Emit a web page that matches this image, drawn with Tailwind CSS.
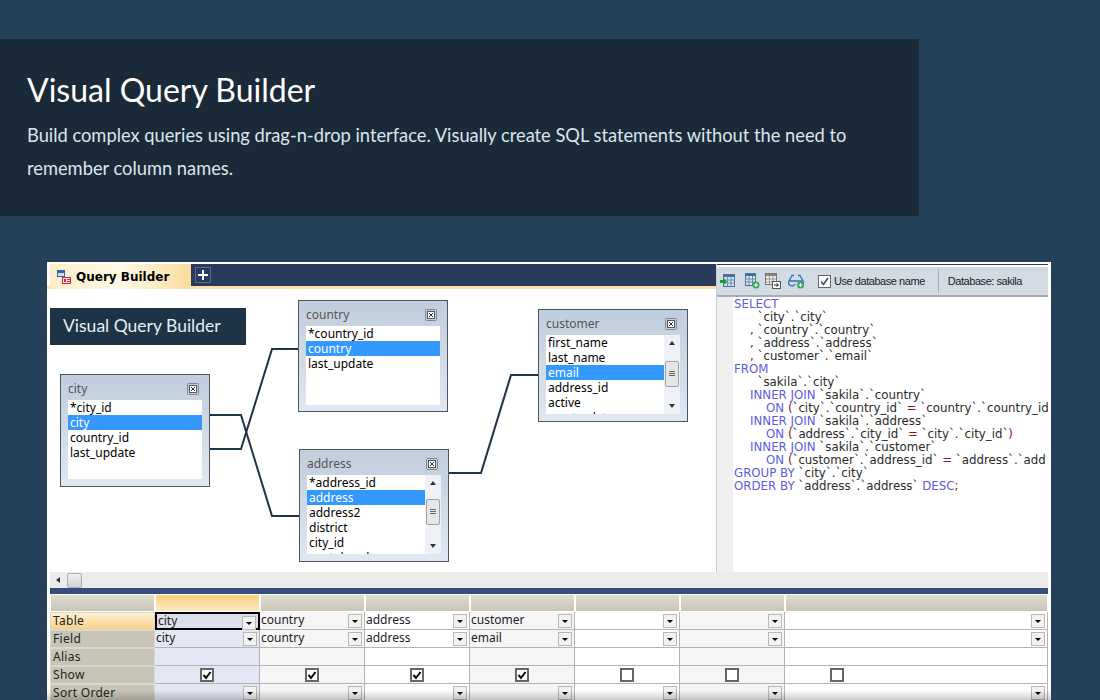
<!DOCTYPE html>
<html lang="en">
<head>
    <meta charset="UTF-8">
    <title>Visual Query Builder</title>
    <script src="https://cdn.jsdelivr.net/npm/@tailwindcss/browser@4"></script>
</head>
<body class="bg-[#254059] w-[1100px] h-[700px] overflow-hidden font-['Lato',sans-serif]">

    <!-- Heading band -->
    <header class="mt-[39px] w-[919px] h-[177px] bg-[#1a2a39] pl-[27px] pt-[29px]">
        <h1 class="text-[32px] leading-[44px] text-white font-normal">Visual Query Builder</h1>
        <p class="mt-[7px] text-[18.3px] leading-[33px] text-[#dce5ea] font-normal w-[860px]">Build complex queries using drag-n-drop interface. Visually create SQL statements without the need to remember column names.</p>
    </header>

    <!-- Application screenshot -->
    <section class="relative mt-[46px] ml-[47px] w-[1004px] h-[438px] bg-white border-t-2 border-white overflow-hidden font-['Noto_Sans',sans-serif]">

        <div class="flex h-[308px]">
            <!-- Left: tabs and diagram -->
            <div class="w-[669px] shrink-0 flex flex-col">
                <div class="flex h-[22px] pl-[3px] border-b-[3px] border-[#fbe3a8] box-content">
                    <div class="flex items-center gap-[5px] w-[141px] pl-[7px] h-[25px] bg-gradient-to-r from-[#fdeec7] via-[#fff9e8] to-[#fbdd9c]">
                        <svg width="14" height="14" viewBox="0 0 14 14">
                            <rect x="0.5" y="0.5" width="7" height="6" fill="#cfe0f5" stroke="#3563b5"/>
                            <rect x="1" y="1" width="6" height="2" fill="#3563b5"/>
                            <rect x="5.5" y="7.5" width="8" height="6" fill="#fde3e3" stroke="#d8283c"/>
                            <rect x="7" y="9" width="2" height="3" fill="#d8283c"/>
                            <rect x="10" y="9" width="3" height="1" fill="#d8283c"/>
                            <rect x="10" y="11" width="3" height="1" fill="#d8283c"/>
                        </svg>
                        <span class="text-[12px] font-bold text-black font-['DejaVu_Sans',sans-serif]">Query Builder</span>
                    </div>
                    <div class="flex-1 bg-[#2a3a5c] flex items-start pl-[4px] pt-[3px]">
                        <div class="w-[16px] h-[16px] border border-[#5c6c8c] flex items-center justify-center">
                            <svg width="12" height="12" viewBox="0 0 12 12"><path d="M6 1v10M1 6h10" stroke="#fff" stroke-width="2"/></svg>
                        </div>
                    </div>
                </div>

                <!-- Diagram canvas: table nodes sit at free positions -->
                <div id="canvas" class="relative flex-1 bg-white">
                    <svg class="absolute left-0 top-0" width="669" height="283" fill="none" stroke="#1f3346" stroke-width="2">
                        <path d="M163 126H194L225 227H252"/>
                        <path d="M163 160H194L225 60H251"/>
                        <path d="M402 184H434L464 86H491"/>
                    </svg>
                    <div class="absolute left-[3px] top-[19px] w-[196px] h-[37px] bg-[#1f3346] pl-[13px] text-[17.5px] leading-[35px] text-[#e6eef4] font-['Lato',sans-serif]">Visual Query Builder</div>

                    <div class="absolute left-[13px] top-[85px] w-[150px] h-[113px] border border-[#4c5660] bg-gradient-to-b from-[#c0cddb] to-[#dfe8f3]">
                        <div class="flex justify-between items-center h-[25px] pt-[3px] pl-[7px] pr-[10px] text-[12px] text-[#555]"><span>city</span><svg width="12" height="12" viewBox="0 0 12 12" fill="none"><rect x="0.5" y="0.5" width="11" height="11" rx="1" stroke="#7b8794"/><rect x="2.500" y="2.500" width="7" height="7" fill="#fff" stroke="#555"/><path d="M4 4l4 4M8 4l-4 4" stroke="#333"/></svg></div>
                        <ul class="mx-[7px] h-[79px] bg-white text-[12px] leading-[15px] text-black overflow-hidden">
                            <li class="pl-[2px]">*city_id</li>
                            <li class="pl-[2px] bg-[#3399ff] text-white">city</li>
                            <li class="pl-[2px]">country_id</li>
                            <li class="pl-[2px]">last_update</li>
                        </ul>
                    </div>

                    <div class="absolute left-[251px] top-[11px] w-[150px] h-[112px] border border-[#4c5660] bg-gradient-to-b from-[#c0cddb] to-[#dfe8f3]">
                        <div class="flex justify-between items-center h-[25px] pt-[3px] pl-[7px] pr-[10px] text-[12px] text-[#555]"><span>country</span><svg width="12" height="12" viewBox="0 0 12 12" fill="none"><rect x="0.5" y="0.5" width="11" height="11" rx="1" stroke="#7b8794"/><rect x="2.500" y="2.500" width="7" height="7" fill="#fff" stroke="#555"/><path d="M4 4l4 4M8 4l-4 4" stroke="#333"/></svg></div>
                        <ul class="mx-[7px] h-[79px] bg-white text-[12px] leading-[15px] text-black overflow-hidden">
                            <li class="pl-[2px]">*country_id</li>
                            <li class="pl-[2px] bg-[#3399ff] text-white">country</li>
                            <li class="pl-[2px]">last_update</li>
                        </ul>
                    </div>

                    <div class="absolute left-[252px] top-[160px] w-[150px] h-[113px] border border-[#4c5660] bg-gradient-to-b from-[#c0cddb] to-[#dfe8f3]">
                        <div class="flex justify-between items-center h-[25px] pt-[3px] pl-[7px] pr-[10px] text-[12px] text-[#555]"><span>address</span><svg width="12" height="12" viewBox="0 0 12 12" fill="none"><rect x="0.5" y="0.5" width="11" height="11" rx="1" stroke="#7b8794"/><rect x="2.500" y="2.500" width="7" height="7" fill="#fff" stroke="#555"/><path d="M4 4l4 4M8 4l-4 4" stroke="#333"/></svg></div>
                        <div class="mx-[7px] h-[79px] flex">
                            <ul class="flex-1 bg-white text-[12px] leading-[15px] text-black overflow-hidden">
                                <li class="pl-[2px]">*address_id</li>
                                <li class="pl-[2px] bg-[#3399ff] text-white">address</li>
                                <li class="pl-[2px]">address2</li>
                                <li class="pl-[2px]">district</li>
                                <li class="pl-[2px]">city_id</li>
                                <li class="pl-[2px]">postal_code</li>
                            </ul>
                            <div class="w-[16px] bg-[#eef1f5] flex flex-col items-center justify-between py-[6px]">
                                <span class="w-0 h-0 border-x-[3px] border-x-transparent border-b-[4px] border-b-[#333]"></span>
                                <span class="w-[14px] h-[26px] -mt-[6px] border border-[#9aa3ad] rounded-[2px] bg-[#e6e6e6] flex flex-col items-center justify-center gap-[1px]"><i class="block w-[6px] h-px bg-[#666]"></i><i class="block w-[6px] h-px bg-[#666]"></i><i class="block w-[6px] h-px bg-[#666]"></i></span>
                                <span class="w-0 h-0 border-x-[3px] border-x-transparent border-t-[4px] border-t-[#333]"></span>
                            </div>
                        </div>
                    </div>

                    <div class="absolute left-[491px] top-[20px] w-[150px] h-[113px] border border-[#4c5660] bg-gradient-to-b from-[#c0cddb] to-[#dfe8f3]">
                        <div class="flex justify-between items-center h-[25px] pt-[3px] pl-[7px] pr-[10px] text-[12px] text-[#555]"><span>customer</span><svg width="12" height="12" viewBox="0 0 12 12" fill="none"><rect x="0.5" y="0.5" width="11" height="11" rx="1" stroke="#7b8794"/><rect x="2.500" y="2.500" width="7" height="7" fill="#fff" stroke="#555"/><path d="M4 4l4 4M8 4l-4 4" stroke="#333"/></svg></div>
                        <div class="mx-[7px] h-[79px] flex">
                            <ul class="flex-1 bg-white text-[12px] leading-[15px] text-black overflow-hidden">
                                <li class="pl-[2px]">first_name</li>
                                <li class="pl-[2px]">last_name</li>
                                <li class="pl-[2px] bg-[#3399ff] text-white">email</li>
                                <li class="pl-[2px]">address_id</li>
                                <li class="pl-[2px]">active</li>
                                <li class="pl-[2px]">create_date</li>
                            </ul>
                            <div class="w-[16px] bg-[#eef1f5] flex flex-col items-center justify-between py-[6px]">
                                <span class="w-0 h-0 border-x-[3px] border-x-transparent border-b-[4px] border-b-[#333]"></span>
                                <span class="w-[14px] h-[26px] -mt-[2px] border border-[#9aa3ad] rounded-[2px] bg-[#e6e6e6] flex flex-col items-center justify-center gap-[1px]"><i class="block w-[6px] h-px bg-[#666]"></i><i class="block w-[6px] h-px bg-[#666]"></i><i class="block w-[6px] h-px bg-[#666]"></i></span>
                                <span class="w-0 h-0 border-x-[3px] border-x-transparent border-t-[4px] border-t-[#333]"></span>
                            </div>
                        </div>
                    </div>
                </div>
            </div>

            <!-- Right: toolbar and SQL -->
            <div class="w-[332px] shrink-0 flex flex-col border-l border-[#c8ccd2]">
                <div class="h-px mb-[2px] bg-[#2a3a5c]"></div>
                <div class="flex items-center h-[30px] pl-[3px] bg-[#d2dae3] border-b-2 border-[#a9adb2] text-[11px] text-[#222] tracking-[-0.45px] font-['Liberation_Sans',sans-serif]">
                    <svg width="16" height="16" viewBox="0 0 16 16" class="mr-[8px]">
                        <rect x="3.500" y="1.500" width="11" height="12" fill="#cfe0f0" stroke="#4a7196"/><rect x="4" y="2" width="10" height="2" fill="#3f6f9c"/><path d="M3 7h12M3 10h12M7.500 3v10M11 3v10" stroke="#6f93b5"/>
                        <path d="M0 7h3V4.500L7 8.500 3 12.500V10H0z" fill="#18a030"/>
                    </svg>
                    <svg width="16" height="16" viewBox="0 0 16 16" class="mr-[5px]">
                        <rect x="1.500" y="0.500" width="10" height="12" fill="#dde6ef" stroke="#4a7196"/><rect x="2" y="1" width="9" height="2" fill="#3f6f9c"/><path d="M1 6h11M1 9h11M5 3v9M8.500 3v9" stroke="#6b8aa8"/>
                        <circle cx="12" cy="12" r="3.500" fill="#35ab5c"/><path d="M12 10v4M10 12h4" stroke="#fff"/>
                    </svg>
                    <svg width="16" height="16" viewBox="0 0 16 16" class="mr-[7px]">
                        <rect x="0.500" y="0.500" width="11" height="11" fill="#eee" stroke="#777"/><rect x="1" y="1" width="10" height="2" fill="#888"/><path d="M1 6h10M1 9h10M4.500 3v8M8 3v8" stroke="#999"/>
                        <rect x="7.500" y="8.500" width="8" height="7" fill="#fff" stroke="#555"/><path d="M9 12h4M11.500 10.500L13.500 12 11.500 13.500" stroke="#222" fill="none"/>
                    </svg>
                    <svg width="17" height="16" viewBox="0 0 17 16" class="mr-[13px]" fill="none">
                        <path d="M1 8L4 2.500H6M15 8L12 2.500H10M1 8h14M1 8a3 3 0 0 0 6 3M9 11a3 3 0 0 0 6-3" stroke="#2f6fc4" stroke-width="1.300"/>
                        <circle cx="12.500" cy="12" r="3.500" fill="#35ab5c"/><path d="M12.500 10v4M10.500 12h4" stroke="#fff"/>
                    </svg>
                    <span class="w-[13px] h-[13px] border border-[#666] bg-white flex items-center justify-center mr-[3px]">
                        <svg width="11" height="11" viewBox="0 0 11 11" fill="none"><path d="M2 5.500l2.500 3L9 2" stroke="#3a4a7a" stroke-width="1.600"/></svg>
                    </span>
                    <span>Use database name</span>
                    <span class="w-px h-[24px] bg-[#a9adb2] ml-[13px] mr-[9px]"></span>
                    <span>Database: sakila</span>
                </div>
                <div class="flex flex-1 bg-white">
                    <div class="w-[16px] shrink-0 bg-[#f0f0f0]"></div>
                    <pre class="pl-[1px] pt-[1px] overflow-hidden text-[11.8px] leading-[13px] text-[#2a2a2a] font-['DejaVu_Sans',sans-serif] [tab-size:16px]"><b class="font-normal text-[#5c5ce6]">SELECT</b>
	  `city`.`city`
	<b class="font-normal text-[#8b1a1a]">,</b> `country`.`country`
	<b class="font-normal text-[#8b1a1a]">,</b> `address`.`address`
	<b class="font-normal text-[#8b1a1a]">,</b> `customer`.`email`
<b class="font-normal text-[#5c5ce6]">FROM</b>
	  `sakila`.`city`
	<b class="font-normal text-[#5c5ce6]">INNER JOIN</b> `sakila`.`country`
		<b class="font-normal text-[#5c5ce6]">ON</b> <b class="font-normal text-[#8b1a1a]">(</b>`city`.`country_id` <b class="font-normal text-[#8b1a1a]">=</b> `country`.`country_id
	<b class="font-normal text-[#5c5ce6]">INNER JOIN</b> `sakila`.`address`
		<b class="font-normal text-[#5c5ce6]">ON</b> <b class="font-normal text-[#8b1a1a]">(</b>`address`.`city_id` <b class="font-normal text-[#8b1a1a]">=</b> `city`.`city_id`<b class="font-normal text-[#8b1a1a]">)</b>
	<b class="font-normal text-[#5c5ce6]">INNER JOIN</b> `sakila`.`customer`
		<b class="font-normal text-[#5c5ce6]">ON</b> <b class="font-normal text-[#8b1a1a]">(</b>`customer`.`address_id` <b class="font-normal text-[#8b1a1a]">=</b> `address`.`add
<b class="font-normal text-[#5c5ce6]">GROUP BY</b> `city`.`city`
<b class="font-normal text-[#5c5ce6]">ORDER BY</b> `address`.`address` <b class="font-normal text-[#5c5ce6]">DESC</b><b class="font-normal text-[#8b1a1a]">;</b></pre>
                </div>
            </div>
        </div>

        <!-- Horizontal scrollbar -->
        <div class="ml-[3px] w-[998px] h-[16px] bg-[#ececec] flex items-center pl-[6px]">
            <span class="w-0 h-0 border-y-[3px] border-y-transparent border-r-[4px] border-r-[#333]"></span>
            <span class="ml-[7px] w-[15px] h-[15px] border border-[#a8adb3] rounded-[2px] bg-gradient-to-b from-[#f0f0f0] to-[#cfd2d6]"></span>
        </div>
        <div class="ml-[3px] w-[998px] h-[6px] bg-[#34507a]"></div>

        <!-- Criteria grid, filled in by the script below -->
        <div id="grid" class="ml-[3px] w-[998px] grid grid-cols-[105px_105px_105px_105px_105px_105px_105px_1fr] grid-rows-[18px_18px_18px_18px_18px_18px] text-[12px] text-[#222]"></div>

        <div class="absolute left-0 right-0 bottom-0 h-[10px] bg-gradient-to-b from-black/0 to-black/20"></div>
    </section>

    <script>
        const arrow = '<span class="absolute right-[2px] top-[2px] w-[14px] h-[14px] bg-[#f2f2f2] border border-[#b8b8b8] flex items-center justify-center"><i class="w-0 h-0 border-x-[3px] border-x-transparent border-t-[3px] border-t-black"></i></span>';
        const colBg = ['bg-[#e3e7f3]', 'bg-[#f5f5f5]', 'bg-white', 'bg-[#f5f5f5]', 'bg-white', 'bg-[#f5f5f5]', 'bg-white'];
        const rows = [
            ['Table', ['city', 'country', 'address', 'customer', '', '', ''], true],
            ['Field', ['city', 'country', 'address', 'email', '', '', ''], true],
            ['Alias', ['', '', '', '', '', '', ''], false],
            ['Show', null, false],
            ['Sort Order', ['', '', '', '', '', '', ''], true],
        ];
        let html = '<div class="border border-white bg-gradient-to-b from-[#dedccf] to-[#c8c6b8]"></div>';
        for (let c = 0; c < 7; c++) {
            html += c === 0
                ? '<div class="border border-white bg-gradient-to-b from-[#f8cf7f] to-[#fce9c0]"></div>'
                : '<div class="border border-white bg-gradient-to-b from-[#dedccf] to-[#c8c6b8]"></div>';
        }
        rows.forEach((row, r) => {
            const labelBg = r === 0 ? 'bg-gradient-to-b from-[#fdf0d2] to-[#f9d184]' : 'bg-[#c8c5b6]';
            html += `<div class="${labelBg} border border-[#d8d8d0] pl-[2px] leading-[16px] tracking-[0.3px]">${row[0]}</div>`;
            for (let c = 0; c < 7; c++) {
                const selected = r === 0 && c === 0;
                const border = selected ? 'border-2 border-black bg-[#dcdeeb] leading-[14px]' : 'border-r border-b border-[#b4b4b4] leading-[16px] ' + colBg[c];
                let inner = '';
                if (row[1]) inner = row[1][c] + (row[2] ? arrow : '');
                else inner = `<span class="absolute left-[45px] top-[2px] w-[14px] h-[14px] border-2 border-[#666] bg-white flex items-center justify-center">${c < 4 ? '<svg width="10" height="10" viewBox="0 0 10 10" fill="none"><path d="M1.500 5l2.500 3L8.500 2" stroke="#000" stroke-width="2"/></svg>' : ''}</span>`;
                html += `<div class="relative ${border} pl-[1px]">${inner}</div>`;
            }
        });
        document.getElementById('grid').innerHTML = html;
    </script>
</body>
</html>
